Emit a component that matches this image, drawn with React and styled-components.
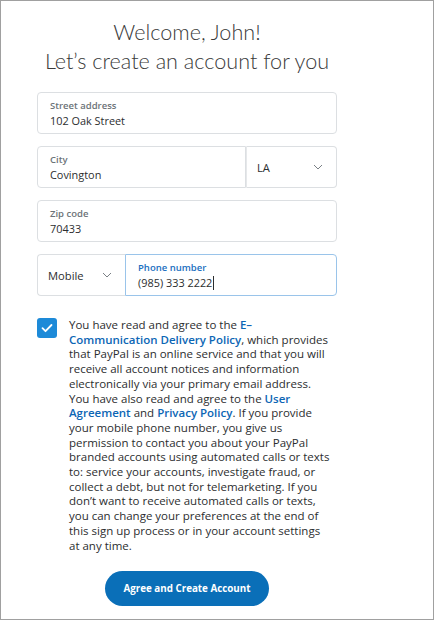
import React from 'react';
import styled, { createGlobalStyle } from 'styled-components';

const Global = createGlobalStyle`
  html, body { margin: 0; padding: 0; background: #fff; }
  body { font-family: "Open Sans", Lato, sans-serif; }
`;

const Frame = styled.div`
  box-sizing: border-box;
  width: 434px;
  height: 620px;
  border: 1px solid #a0a0a0;
  background: #fff;
  padding: 17px 0 0 36px;
`;

const Column = styled.div`
  width: 300px;
  display: flex;
  flex-direction: column;
  align-items: center;
`;

const Title = styled.h1`
  margin: 0 0 16px;
  font-family: Lato, "Open Sans", sans-serif;
  font-weight: 300;
  font-size: 21.6px;
  line-height: 29px;
  color: #3a3a3a;
  text-align: center;
  white-space: nowrap;
`;

const Form = styled.div`
  width: 300px;
  display: flex;
  flex-direction: column;
  gap: 12px;
`;

const Row = styled.div`
  display: flex;
  height: 42px;
`;

const Field = styled.div`
  box-sizing: border-box;
  flex: 1 1 auto;
  height: 42px;
  border: 1px solid ${p => (p.focus ? '#9ac4ea' : '#dcdfe2')};
  border-radius: ${p => p.radius || '4px'};
  padding: 6px 12px 0;
  display: flex;
  flex-direction: column;
  background: #fff;
`;

const Label = styled.span`
  font-size: 9.5px;
  line-height: 13px;
  font-weight: 600;
  color: ${p => (p.focus ? '#1a6fc0' : '#6c7378')};
`;

const Value = styled.span`
  font-size: 10.9px;
  line-height: 17px;
  color: #2c2e2f;
  display: flex;
  align-items: center;
`;

const Caret = styled.span`
  display: inline-block;
  width: 1px;
  height: 14px;
  background: #2c2e2f;
  margin-left: 1px;
`;

const Select = styled.div`
  box-sizing: border-box;
  flex: none;
  width: ${p => p.w}px;
  height: 42px;
  border: 1px solid #dcdfe2;
  border-radius: ${p => p.radius};
  display: flex;
  align-items: center;
  justify-content: space-between;
  padding: 0 13px 0 10px;
  font-size: 11.2px;
  color: #2c2e2f;
  ${p => p.side === 'right' && 'border-left-color: #e6e8ea;'}
  ${p => p.side === 'left' && 'border-right: none;'}
`;

const Chevron = () => (
  <svg width="10" height="6" viewBox="0 0 10 6">
    <path d="M1 1l4 4 4-4" fill="none" stroke="#7a8085" strokeWidth="1" />
  </svg>
);

const Consent = styled.div`
  width: 300px;
  margin-top: 22px;
  display: flex;
  gap: 12px;
`;

const Box = styled.div`
  flex: none;
  width: 20px;
  height: 20px;
  border-radius: 3px;
  background: #1d8ad8;
  display: flex;
  align-items: center;
  justify-content: center;
`;

const Text = styled.p`
  margin: 0;
  font-size: 11.5px;
  line-height: 14.7px;
  color: #2c2e2f;
  white-space: nowrap;
`;

const Link = styled.b`
  color: #0c66b5;
  font-weight: 600;
`;

const Button = styled.button`
  margin-top: 18px;
  width: 164px;
  height: 35px;
  border: none;
  border-radius: 18px;
  background: #0a6fb8;
  color: #fff;
  font-family: "Open Sans", sans-serif;
  font-weight: 700;
  font-size: 9.8px;
  cursor: pointer;
`;

const lines = [
  <>You have read and agree to the <Link>E–</Link></>,
  <><Link>Communication Delivery Policy</Link>, which provides</>,
  'that PayPal is an online service and that you will',
  'receive all account notices and information',
  'electronically via your primary email address.',
  <>You have also read and agree to the <Link>User</Link></>,
  <><Link>Agreement</Link> and <Link>Privacy Policy</Link>. If you provide</>,
  'your mobile phone number, you give us',
  'permission to contact you about your PayPal',
  'branded accounts using automated calls or texts',
  'to: service your accounts, investigate fraud, or',
  'collect a debt, but not for telemarketing. If you',
  'don’t want to receive automated calls or texts,',
  'you can change your preferences at the end of',
  'this sign up process or in your account settings',
  'at any time.',
];

export default function App() {
  return (
    <>
      <Global />
      <Frame>
        <Column>
          <Title>
            Welcome, John!
            <br />
            Let’s create an account for you
          </Title>
          <Form>
            <Field>
              <Label>Street address</Label>
              <Value>102 Oak Street</Value>
            </Field>
            <Row>
              <Field radius="4px 0 0 4px">
                <Label>City</Label>
                <Value>Covington</Value>
              </Field>
              <Select w={91} radius="0 4px 4px 0" side="right">
                LA <Chevron />
              </Select>
            </Row>
            <Field>
              <Label>Zip code</Label>
              <Value>70433</Value>
            </Field>
            <Row>
              <Select w={88} radius="4px 0 0 4px" side="left">
                Mobile <Chevron />
              </Select>
              <Field focus radius="0 4px 4px 0">
                <Label focus>Phone number</Label>
                <Value>
                  (985) 333 2222<Caret />
                </Value>
              </Field>
            </Row>
          </Form>
          <Consent>
            <Box>
              <svg width="12" height="10" viewBox="0 0 12 10">
                <path d="M1.5 5.2l3 3L10.5 2" fill="none" stroke="#fff" strokeWidth="1.8" strokeLinecap="round" strokeLinejoin="round" />
              </svg>
            </Box>
            <Text>
              {lines.map((l, i) => (
                <React.Fragment key={i}>
                  {l}
                  {i < lines.length - 1 && <br />}
                </React.Fragment>
              ))}
            </Text>
          </Consent>
          <Button>Agree and Create Account</Button>
        </Column>
      </Frame>
    </>
  );
}
